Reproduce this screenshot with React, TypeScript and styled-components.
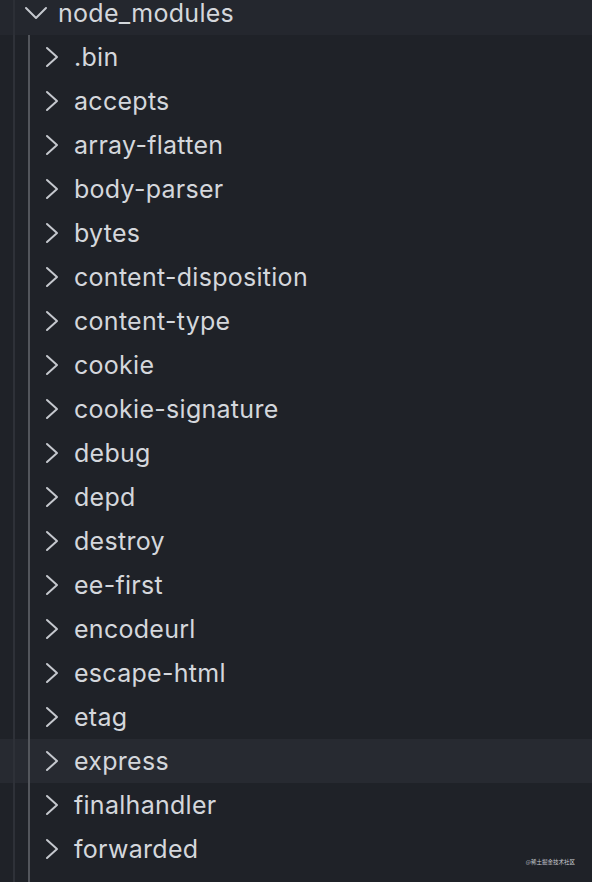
import React from "react";
import styled, { createGlobalStyle } from "styled-components";

const GlobalStyle = createGlobalStyle`
  html, body {
    margin: 0;
    padding: 0;
    background: #1f2228;
  }
  body {
    font-family: Inter, "Noto Sans", sans-serif;
  }
`;

const Panel = styled.div`
  position: relative;
  width: 592px;
  height: 882px;
  overflow: hidden;
  background: #1f2228;
`;

const Tree = styled.div`
  display: flex;
  flex-direction: column;
`;

const Row = styled.div<{ $depth: number; $hover?: boolean }>`
  position: relative;
  display: flex;
  align-items: center;
  height: 44px;
  padding-left: ${(p) => 20 + p.$depth * 16}px;
  background: ${(p) => (p.$hover ? "#272a31" : "transparent")};
  color: #d4d7dc;
  font-size: 25px;
  letter-spacing: 0.28px;
  white-space: nowrap;
`;

const HeadRow = styled(Row)`
  box-sizing: border-box;
  height: 35px;
  padding-bottom: 9px;
  background: #24272e;
`;

const Guide = styled.span<{ $x: number; $c: string }>`
  position: absolute;
  top: 0;
  bottom: 0;
  left: ${(p) => p.$x}px;
  width: 2px;
  background: ${(p) => p.$c};
`;

const Twistie = styled.span`
  display: flex;
  align-items: center;
  justify-content: center;
  width: 32px;
  height: 32px;
  margin-right: 6px;
  flex-shrink: 0;
`;

const Label = styled.span`
  line-height: 26px;
`;

const Watermark = styled.div`
  position: absolute;
  right: 17px;
  bottom: 16px;
  font-family: "Noto Sans CJK SC", sans-serif;
  font-size: 5.5px;
  color: #c9ccd2;
`;

const ChevronRight = () => (
  <svg width="32" height="32" viewBox="0 0 32 32">
    <path d="M11 7 L21 16 L11 25" fill="none" stroke="#c5c8ce" strokeWidth="2" strokeLinecap="round" strokeLinejoin="round" />
  </svg>
);

const ChevronDown = () => (
  <svg width="32" height="32" viewBox="0 0 32 32">
    <path d="M6 11 L16 21 L26 11" fill="none" stroke="#c5c8ce" strokeWidth="2" strokeLinecap="round" strokeLinejoin="round" />
  </svg>
);

const modules = [
  ".bin",
  "accepts",
  "array-flatten",
  "body-parser",
  "bytes",
  "content-disposition",
  "content-type",
  "cookie",
  "cookie-signature",
  "debug",
  "depd",
  "destroy",
  "ee-first",
  "encodeurl",
  "escape-html",
  "etag",
  "express",
  "finalhandler",
  "forwarded",
];

export default function App() {
  return (
    <Panel>
      <GlobalStyle />
      <Tree>
        <HeadRow $depth={0}>
          <Guide $x={13} $c="#2c2f36" />
          <Twistie>
            <ChevronDown />
          </Twistie>
          <Label>node_modules</Label>
        </HeadRow>
        {modules.map((name) => (
          <Row key={name} $depth={1} $hover={name === "express"}>
            <Guide $x={13} $c="#2e3138" />
            <Guide $x={28} $c="#53565c" />
            <Twistie>
              <ChevronRight />
            </Twistie>
            <Label>{name}</Label>
          </Row>
        ))}
        <Row $depth={1}>
          <Guide $x={13} $c="#2e3138" />
          <Guide $x={28} $c="#53565c" />
        </Row>
      </Tree>
      <Watermark>@稀土掘金技术社区</Watermark>
    </Panel>
  );
}
